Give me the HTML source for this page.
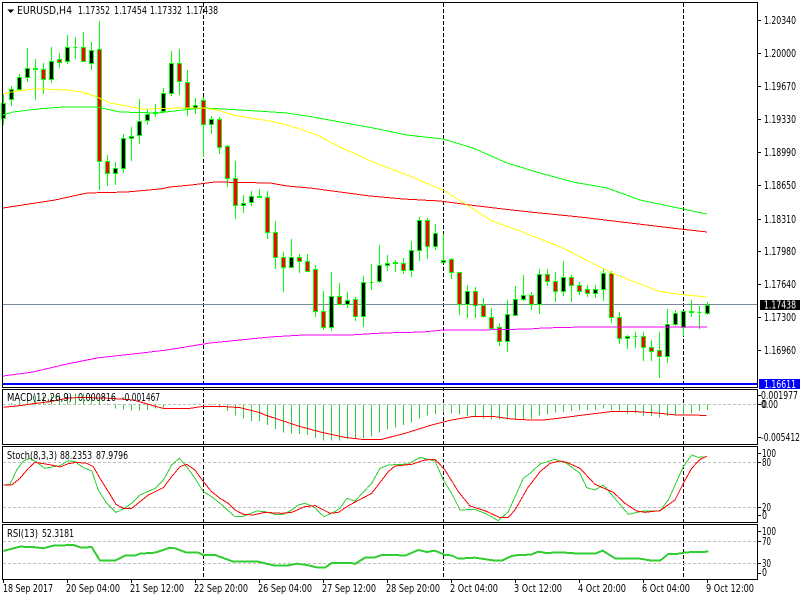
<!DOCTYPE html>
<html><head><meta charset="utf-8"><style>
html,body{margin:0;padding:0;background:#fff;width:800px;height:600px;overflow:hidden}
svg{display:block;position:absolute;left:0;top:0}
text{font-family:"DejaVu Sans","Liberation Sans",sans-serif;font-size:11px;fill:#000}
polyline{fill:none;vector-effect:non-scaling-stroke}
</style></head><body>
<svg width="800" height="600" viewBox="0 0 800 600" shape-rendering="crispEdges">
<!-- dashed verticals -->
<path d="M203.5 3V579M443.5 3V579M683.5 3V579" stroke="#000" stroke-width="1" stroke-dasharray="4 2" fill="none"/>
<!-- price line -->
<path d="M3 304.5H757" stroke="#778899" fill="none"/>
<!-- wicks -->
<path fill="none" stroke="#00ff00" d="M3.5 94V125M11.5 86V106M19.5 74V91M27.5 48V82M35.5 59V100M43.5 63V94M51.5 47V83M59.5 53V68M67.5 35V64M75.5 37V59M83.5 32V62M91.5 42V70M99.5 21V190M107.5 155V186M115.5 162V185M123.5 134V173M131.5 127V161M139.5 99V144M147.5 109V125M155.5 104V117M163.5 88V113M171.5 51V96M179.5 49V95M187.5 70V116M195.5 98V114M203.5 97V157M211.5 116V134M219.5 117V154M227.5 145V187M235.5 161V219M243.5 195V213M251.5 191V206M259.5 189V197M267.5 191V239M275.5 221V269M283.5 252V292M291.5 239V267M299.5 254V273M307.5 254V272M315.5 265V317M323.5 291V330M331.5 272V331M339.5 283V304M347.5 292V308M355.5 297V321M363.5 276V327M371.5 264V290M379.5 245V283M387.5 255V271M395.5 260V272M403.5 258V274M411.5 241V277M419.5 217V261M427.5 218V259M435.5 224V250M443.5 234V263M451.5 258V279M459.5 272V315M467.5 285V318M475.5 287V318M483.5 298V318M491.5 308V328M499.5 323V346M507.5 300V352M515.5 286V316M523.5 275V301M531.5 292V310M539.5 269V314M547.5 269V286M555.5 272V302M563.5 261V296M571.5 275V302M579.5 282V295M587.5 285V297M595.5 285V298M603.5 269V301M611.5 271V323M619.5 312V344M627.5 335V349M635.5 332V348M643.5 332V361M651.5 340V361M659.5 332V378M667.5 309V363M675.5 310V326M683.5 311V336M691.5 300V317M699.5 306V329M707.5 302V315"/>
<!-- black bodies -->
<path fill="#000" stroke="#00ff00" d="M1.5 103.5h4v15h-4zM9.5 89.5h4v10h-4zM17.5 77.5h4v12h-4zM25.5 68.5h4v9h-4zM33.5 68.5h4v1h-4zM49.5 61.5h4v18h-4zM65.5 47.5h4v14h-4zM73.5 47.5h4v0h-4zM89.5 50.5h4v13h-4zM113.5 168.5h4v5h-4zM121.5 138.5h4v30h-4zM129.5 136.5h4v2h-4zM137.5 121.5h4v14h-4zM145.5 114.5h4v6h-4zM153.5 112.5h4v1h-4zM161.5 93.5h4v18h-4zM169.5 63.5h4v30h-4zM193.5 105.5h4v3h-4zM209.5 119.5h4v5h-4zM241.5 203.5h4v2h-4zM249.5 196.5h4v6h-4zM257.5 196.5h4v1h-4zM289.5 257.5h4v10h-4zM329.5 296.5h4v31h-4zM345.5 300.5h4v4h-4zM361.5 282.5h4v34h-4zM369.5 282.5h4v0h-4zM377.5 265.5h4v16h-4zM385.5 263.5h4v2h-4zM393.5 262.5h4v1h-4zM409.5 250.5h4v20h-4zM417.5 220.5h4v30h-4zM433.5 233.5h4v13h-4zM441.5 260.5h4v2h-4zM465.5 291.5h4v13h-4zM505.5 314.5h4v27h-4zM513.5 299.5h4v16h-4zM521.5 295.5h4v4h-4zM537.5 274.5h4v30h-4zM561.5 277.5h4v14h-4zM593.5 289.5h4v4h-4zM601.5 273.5h4v16h-4zM625.5 336.5h4v2h-4zM633.5 336.5h4v0h-4zM665.5 324.5h4v32h-4zM673.5 313.5h4v11h-4zM681.5 311.5h4v16h-4zM689.5 311.5h4v1h-4zM697.5 312.5h4v0h-4zM705.5 305.5h4v8h-4z"/>
<!-- red bodies -->
<path fill="#ff0000" stroke="#00ff00" d="M41.5 69.5h4v10h-4zM57.5 59.5h4v3h-4zM81.5 47.5h4v14h-4zM97.5 49.5h4v112h-4zM105.5 161.5h4v12h-4zM177.5 63.5h4v18h-4zM185.5 82.5h4v26h-4zM201.5 100.5h4v24h-4zM217.5 119.5h4v28h-4zM225.5 146.5h4v32h-4zM233.5 178.5h4v27h-4zM265.5 197.5h4v35h-4zM273.5 232.5h4v25h-4zM281.5 257.5h4v10h-4zM297.5 257.5h4v4h-4zM305.5 261.5h4v10h-4zM313.5 269.5h4v42h-4zM321.5 311.5h4v16h-4zM337.5 296.5h4v8h-4zM353.5 299.5h4v17h-4zM401.5 263.5h4v7h-4zM425.5 220.5h4v26h-4zM449.5 259.5h4v13h-4zM457.5 272.5h4v32h-4zM473.5 291.5h4v14h-4zM481.5 305.5h4v11h-4zM489.5 317.5h4v11h-4zM497.5 327.5h4v14h-4zM529.5 295.5h4v9h-4zM545.5 274.5h4v7h-4zM553.5 281.5h4v10h-4zM569.5 277.5h4v8h-4zM577.5 285.5h4v6h-4zM585.5 289.5h4v4h-4zM609.5 273.5h4v44h-4zM617.5 317.5h4v21h-4zM641.5 336.5h4v11h-4zM649.5 347.5h4v4h-4zM657.5 350.5h4v6h-4z"/>
<!-- MAs -->
<polyline stroke="#ff0000" points="3,208 55,200 87,193 127,192 160,189 170,187 191,185 215,182 270,183 287,186 310,188 340,192 370,196 403,199 440,201 470,205 503,209 530,212 580,217 630,223 680,229 707,232"/>
<polyline stroke="#00ff00" points="3,115 13,112 37,109 63,107 97,107 120,112 157,113 183,110 203,108 223,109 257,111 287,113 313,117 340,122 373,128 407,135 443,139 473,148 507,163 540,173 573,182 607,188 640,200 683,209 707,214"/>
<polyline stroke="#ffff00" points="3,94 11,92 33,89 43,89 67,90 82,92 97,97 110,103 143,109 183,108 203,108 217,110 233,115 250,118 270,121 287,125 303,130 317,135 340,147 373,162 407,175 443,190 467,205 492,221 517,230 530,235 563,248 590,262 612,273 630,280 658,291 677,294 707,297"/>
<polyline stroke="#ff00ff" points="3,376 33,372 67,364 97,358 133,354 167,350 210,343 270,337 303,335 350,335 383,333 423,332 443,330 477,330 530,329 543,328 583,327 707,327"/>
<!-- blue line -->
<rect x="3" y="383" width="754" height="2" fill="#0000ff"/>
<!-- gridlines -->
<path d="M3 404.5H757M3 462.5H757M3 507.5H757M3 541.5H757M3 563.5H757" stroke="#c0c0c0" stroke-dasharray="3 2" fill="none"/>
<!-- MACD hist -->
<g transform="translate(0,375) scale(1,.33333)">
<path fill="none" stroke="#32cd32" stroke-width="1" vector-effect="non-scaling-stroke" d="M11.5 88V84M19.5 88V80M27.5 88V68M35.5 88V62M43.5 88V62M51.5 88V60M59.5 88V58M67.5 88V55M75.5 88V55M83.5 88V55M91.5 88V62M99.5 88V75M107.5 88V85M115.5 88V100M123.5 88V104M131.5 88V107M139.5 88V107M147.5 88V105M155.5 88V100M163.5 88V97M211.5 88V92M219.5 88V97M227.5 88V108M235.5 88V122M243.5 88V130M251.5 88V138M259.5 88V138M267.5 88V150M275.5 88V162M283.5 88V172M291.5 88V175M299.5 88V177M307.5 88V180M315.5 88V189M323.5 88V197M331.5 88V197M339.5 88V197M347.5 88V192M355.5 88V192M363.5 88V190M371.5 88V184M379.5 88V172M387.5 88V164M395.5 88V157M403.5 88V150M411.5 88V142M419.5 88V130M427.5 88V122M435.5 88V117M443.5 88V113M451.5 88V115M459.5 88V118M467.5 88V123M475.5 88V128M483.5 88V130M491.5 88V133M499.5 88V133M507.5 88V134M515.5 88V135M523.5 88V133M531.5 88V132M539.5 88V122M547.5 88V118M555.5 88V113M563.5 88V111M571.5 88V108M579.5 88V105M587.5 88V105M595.5 88V105M603.5 88V100M611.5 88V105M619.5 88V106M627.5 88V117M635.5 88V116M643.5 88V123M651.5 88V123M659.5 88V128M667.5 88V123M675.5 88V120M683.5 88V118M691.5 88V115M699.5 88V108M707.5 88V105"/>
</g>
<!-- MACD signal / stoch / RSI: zoom coordinate groups -->
<g transform="translate(0,375) scale(.33333)">
<polyline stroke="#ff0000" points="10,97 60,92 100,86 150,80 200,70 240,67 330,70 400,75 470,95 490,100 570,100 610,94 660,94 720,98 780,113 795,120"/>
<polyline stroke="#32cd32" points="10,330 30,328 50,285 70,258 90,250 110,262 135,280 160,275 180,272 205,257 225,260 250,278 275,287 295,345 320,385 348,412 370,402 395,385 420,360 465,340 490,315 515,270 538,250 560,275 585,310 610,350 635,365 660,385 705,425 730,424 770,408 795,410"/>
<polyline stroke="#ff0000" points="10,330 35,330 60,310 85,280 105,262 130,266 155,270 180,276 205,266 230,262 260,265 280,275 300,310 325,350 348,388 370,400 395,400 420,380 445,360 490,338 515,305 540,275 560,268 585,285 610,320 635,350 660,370 685,385 705,405 730,418 760,420 795,412"/>
<polyline stroke="#32cd32" stroke-width="2" points="10,528 60,515 100,516 130,520 160,512 220,510 245,518 275,516 300,557 345,557 375,542 405,542 420,536 465,533 510,518 525,520 560,533 595,533 610,540 645,540 700,560 775,560 795,565"/>
</g>
<g transform="translate(265,375) scale(.33333)">
<polyline stroke="#ff0000" points="0,120 100,153 170,172 240,187 290,193 350,193 420,175 500,150 560,135 620,125 690,125 740,132 795,135"/>
<polyline stroke="#32cd32" points="0,410 30,418 55,418 80,405 100,390 120,385 145,395 177,425 205,412 225,400 245,370 270,378 320,325 345,280 370,270 430,267 465,247 510,258 535,315 560,355 585,405 630,403 660,415 700,437 730,410 775,310 795,295"/>
<polyline stroke="#ff0000" points="0,412 50,415 80,412 120,395 150,392 195,415 220,412 250,392 320,355 370,290 390,273 440,268 480,255 510,253 540,285 580,350 615,393 660,407 705,428 730,427 750,405 790,335 795,330"/>
<polyline stroke="#32cd32" stroke-width="2" points="0,565 30,572 65,572 95,566 125,570 160,578 180,578 200,564 260,564 270,567 300,548 330,547 350,540 390,540 420,542 460,525 485,531 510,527 540,540 560,541 580,551 630,548 690,557 710,557 740,543 760,540 795,539"/>
</g>
<g transform="translate(530,375) scale(.33333)">
<polyline stroke="#ff0000" points="0,135 40,135 100,128 160,120 240,110 320,110 380,114 440,120 530,121"/>
<polyline stroke="#32cd32" points="0,295 30,267 75,253 110,265 150,295 170,338 195,345 220,330 250,365 295,418 340,408 390,408 415,375 460,275 485,240 505,247 530,245"/>
<polyline stroke="#ff0000" points="0,330 30,290 60,265 90,258 110,262 150,280 195,328 250,352 285,385 320,408 345,412 390,407 435,375 460,325 485,280 510,253 530,244"/>
<polyline stroke="#32cd32" stroke-width="2" points="0,540 25,530 50,534 90,532 150,536 195,536 218,527 255,550 330,551 365,557 390,557 415,537 440,537 470,532 535,530"/>
</g>
<!-- frames -->
<path fill="none" stroke="#000" d="M2.5 2.5H757.5V387.5H2.5ZM2.5 389.5H757.5V444.5H2.5ZM2.5 446.5H757.5V522.5H2.5ZM2.5 524.5H757.5V579.5H2.5Z"/>
<!-- ticks -->
<path fill="none" stroke="#000" d="M758 20.5h3M758 53.5h3M758 86.5h3M758 119.5h3M758 152.5h3M758 185.5h3M758 219.5h3M758 251.5h3M758 284.5h3M758 317.5h3M758 350.5h3M758 395.5h3M758 404.5h3M758 437.5h3M758 453.5h3M758 462.5h3M758 507.5h3M758 515.5h3M758 531.5h3M758 541.5h3M758 563.5h3M758 573.5h3M3.5 580v3M67.5 580v3M131.5 580v3M195.5 580v3M259.5 580v3M323.5 580v3M387.5 580v3M451.5 580v3M515.5 580v3M579.5 580v3M643.5 580v3M707.5 580v3"/>
<!-- triangle -->
<path d="M7 9.5h7l-3.5 3.5z" fill="#000"/>
<!-- labels bg -->
<rect x="760" y="300" width="40" height="10" fill="#000"/>
<rect x="759" y="379" width="41" height="10" fill="#0000ff"/>
<!-- text -->
<g shape-rendering="auto">
<text x="17" y="14" textLength="55" lengthAdjust="spacingAndGlyphs">EURUSD,H4</text>
<text x="78" y="14" textLength="32" lengthAdjust="spacingAndGlyphs">1.17352</text>
<text x="114" y="14" textLength="33" lengthAdjust="spacingAndGlyphs">1.17454</text>
<text x="150" y="14" textLength="32" lengthAdjust="spacingAndGlyphs">1.17332</text>
<text x="186" y="14" textLength="32" lengthAdjust="spacingAndGlyphs">1.17438</text>
<text x="764" y="24" textLength="32" lengthAdjust="spacingAndGlyphs">1.20340</text>
<text x="764" y="57" textLength="32" lengthAdjust="spacingAndGlyphs">1.20000</text>
<text x="764" y="90" textLength="32" lengthAdjust="spacingAndGlyphs">1.19670</text>
<text x="764" y="123" textLength="32" lengthAdjust="spacingAndGlyphs">1.19330</text>
<text x="764" y="156" textLength="32" lengthAdjust="spacingAndGlyphs">1.18990</text>
<text x="764" y="189" textLength="32" lengthAdjust="spacingAndGlyphs">1.18650</text>
<text x="764" y="223" textLength="32" lengthAdjust="spacingAndGlyphs">1.18310</text>
<text x="764" y="255" textLength="32" lengthAdjust="spacingAndGlyphs">1.17980</text>
<text x="764" y="288" textLength="32" lengthAdjust="spacingAndGlyphs">1.17640</text>
<text x="764" y="308.5" textLength="32" lengthAdjust="spacingAndGlyphs" style="fill:#fff">1.17438</text>
<text x="764" y="321" textLength="32" lengthAdjust="spacingAndGlyphs">1.17300</text>
<text x="764" y="354" textLength="32" lengthAdjust="spacingAndGlyphs">1.16960</text>
<text x="764" y="388" textLength="32" lengthAdjust="spacingAndGlyphs" style="fill:#fff">1.16611</text>
<text x="7" y="401" textLength="65" lengthAdjust="spacingAndGlyphs">MACD(12,26,9)</text>
<text x="78" y="401" textLength="38" lengthAdjust="spacingAndGlyphs">0.000816</text>
<text x="122" y="401" textLength="38" lengthAdjust="spacingAndGlyphs">-0.001467</text>
<text x="7" y="459" textLength="50" lengthAdjust="spacingAndGlyphs">Stoch(8,3,3)</text>
<text x="60" y="459" textLength="32" lengthAdjust="spacingAndGlyphs">88.2353</text>
<text x="96" y="459" textLength="32" lengthAdjust="spacingAndGlyphs">87.9796</text>
<text x="7" y="537" textLength="31" lengthAdjust="spacingAndGlyphs">RSI(13)</text>
<text x="42" y="537" textLength="32" lengthAdjust="spacingAndGlyphs">52.3181</text>
<text x="761" y="399" textLength="37" lengthAdjust="spacingAndGlyphs">0.001977</text>
<text x="761" y="408" textLength="17" lengthAdjust="spacingAndGlyphs">0.00</text>
<text x="762" y="408" textLength="5" lengthAdjust="spacingAndGlyphs">0</text>
<text x="761" y="441" textLength="39" lengthAdjust="spacingAndGlyphs">-0.005412</text>
<text x="762" y="457" textLength="14" lengthAdjust="spacingAndGlyphs">100</text>
<text x="762" y="466" textLength="9" lengthAdjust="spacingAndGlyphs">80</text>
<text x="762" y="511" textLength="9" lengthAdjust="spacingAndGlyphs">20</text>
<text x="762" y="519" textLength="5" lengthAdjust="spacingAndGlyphs">0</text>
<text x="762" y="535" textLength="14" lengthAdjust="spacingAndGlyphs">100</text>
<text x="762" y="545" textLength="9" lengthAdjust="spacingAndGlyphs">70</text>
<text x="762" y="567" textLength="9" lengthAdjust="spacingAndGlyphs">30</text>
<text x="762" y="576" textLength="5" lengthAdjust="spacingAndGlyphs">0</text>
<text x="3" y="592" textLength="50" lengthAdjust="spacingAndGlyphs">18 Sep 2017</text>
<text x="66" y="592" textLength="54" lengthAdjust="spacingAndGlyphs">20 Sep 04:00</text>
<text x="130" y="592" textLength="54" lengthAdjust="spacingAndGlyphs">21 Sep 12:00</text>
<text x="194" y="592" textLength="54" lengthAdjust="spacingAndGlyphs">22 Sep 20:00</text>
<text x="258" y="592" textLength="54" lengthAdjust="spacingAndGlyphs">26 Sep 04:00</text>
<text x="322" y="592" textLength="54" lengthAdjust="spacingAndGlyphs">27 Sep 12:00</text>
<text x="386" y="592" textLength="54" lengthAdjust="spacingAndGlyphs">28 Sep 20:00</text>
<text x="450" y="592" textLength="48" lengthAdjust="spacingAndGlyphs">2 Oct 04:00</text>
<text x="514" y="592" textLength="48" lengthAdjust="spacingAndGlyphs">3 Oct 12:00</text>
<text x="578" y="592" textLength="48" lengthAdjust="spacingAndGlyphs">4 Oct 20:00</text>
<text x="642" y="592" textLength="48" lengthAdjust="spacingAndGlyphs">6 Oct 04:00</text>
<text x="706" y="592" textLength="48" lengthAdjust="spacingAndGlyphs">9 Oct 12:00</text>
</g>
</svg>
</body></html>
